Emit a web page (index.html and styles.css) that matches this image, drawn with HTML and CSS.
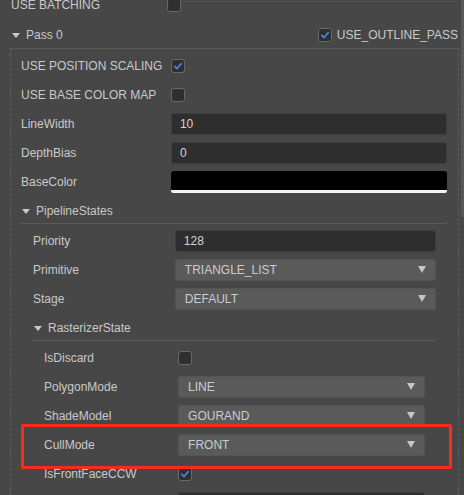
FILE: index.html
```html
<!DOCTYPE html>
<html>
<head>
<meta charset="utf-8">
<link rel="stylesheet" href="styles.css">
</head>
<body>
<div class="app">
  <div class="panel">
    <div class="top-line"></div>
    <div class="row top-row">
      <span class="label">USE BATCHING</span>
      <span class="cb"></span>
    </div>
    <div class="pass-header">
      <div class="fold"><i class="tri"></i><span>Pass 0</span></div>
      <div class="flag">
        <span class="cb"><svg viewBox="0 0 14 14" class="check"><polyline points="3.2,7.4 5.9,10 10.8,4.2"/></svg></span>
        <span>USE_OUTLINE_PASS</span>
      </div>
    </div>
    <div class="pass-box">
      <div class="row">
        <span class="label">USE POSITION SCALING</span>
        <span class="cb"><svg viewBox="0 0 14 14" class="check"><polyline points="3.2,7.4 5.9,10 10.8,4.2"/></svg></span>
      </div>
      <div class="row">
        <span class="label">USE BASE COLOR MAP</span>
        <span class="cb"></span>
      </div>
      <div class="row">
        <span class="label">LineWidth</span>
        <div class="input">10</div>
      </div>
      <div class="row">
        <span class="label">DepthBias</span>
        <div class="input">0</div>
      </div>
      <div class="row">
        <span class="label">BaseColor</span>
        <div class="color"></div>
      </div>
      <div class="section">
        <div class="sec-header"><i class="tri"></i><span>PipelineStates</span></div>
        <div class="sec-body">
          <div class="row">
            <span class="label">Priority</span>
            <div class="input">128</div>
          </div>
          <div class="row">
            <span class="label">Primitive</span>
            <div class="select"><span>TRIANGLE_LIST</span><i class="arrow"></i></div>
          </div>
          <div class="row">
            <span class="label">Stage</span>
            <div class="select"><span>DEFAULT</span><i class="arrow"></i></div>
          </div>
          <div class="section">
            <div class="sec-header"><i class="tri"></i><span>RasterizerState</span></div>
            <div class="sec-body inner">
              <div class="row">
                <span class="label">IsDiscard</span>
                <span class="cb"></span>
              </div>
              <div class="row">
                <span class="label">PolygonMode</span>
                <div class="select"><span>LINE</span><i class="arrow"></i></div>
              </div>
              <div class="row">
                <span class="label">ShadeModel</span>
                <div class="select"><span>GOURAND</span><i class="arrow"></i></div>
              </div>
              <div class="row">
                <span class="label">CullMode</span>
                <div class="select"><span>FRONT</span><i class="arrow"></i></div>
              </div>
              <div class="row">
                <span class="label">IsFrontFaceCCW</span>
                <span class="cb"><svg viewBox="0 0 14 14" class="check"><polyline points="3.2,7.4 5.9,10 10.8,4.2"/></svg></span>
              </div>
              <div class="row">
                <span class="label"></span>
                <div class="input"></div>
              </div>
            </div>
          </div>
        </div>
      </div>
    </div>
  </div>
  <div class="scrollbar"><div class="thumb"></div></div>
  <div class="highlight"></div>
</div>
</body>
</html>
```
FILE: styles.css
```css
html, body {
  margin: 0;
  padding: 0;
  background: #474747;
  overflow: hidden;
}
body {
  font-family: "Liberation Sans", Arial, sans-serif;
  font-size: 12px;
  color: #c9c9c9;
}
.app {
  position: relative;
  display: flex;
  width: 464px;
  height: 495px;
  overflow: hidden;
}
.panel {
  flex: 1;
  min-width: 0;
  margin-top: -10px;
}
.top-line {
  height: 1px;
  background: #555555;
  margin: 11px 3px 0 180px;
}
.row {
  display: grid;
  grid-template-columns: 35.2% 1fr;
  align-items: center;
  height: 29px;
}
.top-row {
  padding: 0 6px 0 11px;
  margin-top: -12px;
}
.label {
  white-space: nowrap;
  color: #c9c9c9;
}
.cb {
  box-sizing: border-box;
  width: 14px;
  height: 14px;
  border: 1px solid #686868;
  border-radius: 3px;
  background: #2f2f2f;
  display: inline-flex;
  align-items: center;
  justify-content: center;
}
.check {
  width: 12px;
  height: 12px;
  fill: none;
  stroke: #3f86e8;
  stroke-width: 2;
  stroke-linecap: round;
  stroke-linejoin: round;
}
.pass-header {
  display: flex;
  align-items: center;
  justify-content: space-between;
  height: 26px;
  padding: 3px 3px 0 11px;
}
.fold {
  display: flex;
  align-items: center;
  gap: 6px;
}
.tri {
  display: block;
  width: 0;
  height: 0;
  margin-left: 1px;
  border-left: 4px solid transparent;
  border-right: 4px solid transparent;
  border-top: 5px solid #c9c9c9;
}
.flag {
  display: flex;
  align-items: center;
  gap: 5px;
}
.pass-box {
  margin: 0 2px 0 10px;
  border-top: 1px solid #595959;
  border-left: 1px dashed #5e5e5e;
  border-right: 1px dashed #5e5e5e;
  padding: 2px 11px 0 10px;
  height: 600px;
}
.input, .select, .color {
  box-sizing: border-box;
  height: 22px;
  border-radius: 3px;
}
.input {
  background: #2e2e2e;
  border: 1px solid #3d3d3d;
  padding: 0 8px;
  display: flex;
  align-items: center;
  color: #d4d4d4;
}
.select {
  background: #5a5a5a;
  border: 1px solid #545454;
  padding: 0 9px 0 9px;
  display: flex;
  align-items: center;
  justify-content: space-between;
  color: #cccccc;
}
.arrow {
  display: block;
  width: 0;
  height: 0;
  border-left: 4.5px solid transparent;
  border-right: 4.5px solid transparent;
  border-top: 7px solid #c6c6c6;
}
.color {
  background: #000;
  border-bottom: 3px solid #f4f4f4;
  border-radius: 3px 3px 2px 2px;
}
.sec-header {
  box-sizing: border-box;
  display: flex;
  align-items: center;
  gap: 6px;
  height: 28px;
  padding-top: 3px;
  border-bottom: 1px solid #5a5a5a;
  margin-bottom: 2px;
}
.sec-body {
  padding: 0 11px 0 12px;
}
.sec-body.inner {
  padding: 0 11px 0 11px;
}
.scrollbar {
  width: 3px;
  flex: none;
}
.thumb {
  height: 217px;
  background: #585858;
}
.highlight {
  position: absolute;
  left: 21px;
  top: 424px;
  width: 431px;
  height: 45px;
  box-sizing: border-box;
  border: 3px solid #ff2a1c;
  border-radius: 2px;
}
```
